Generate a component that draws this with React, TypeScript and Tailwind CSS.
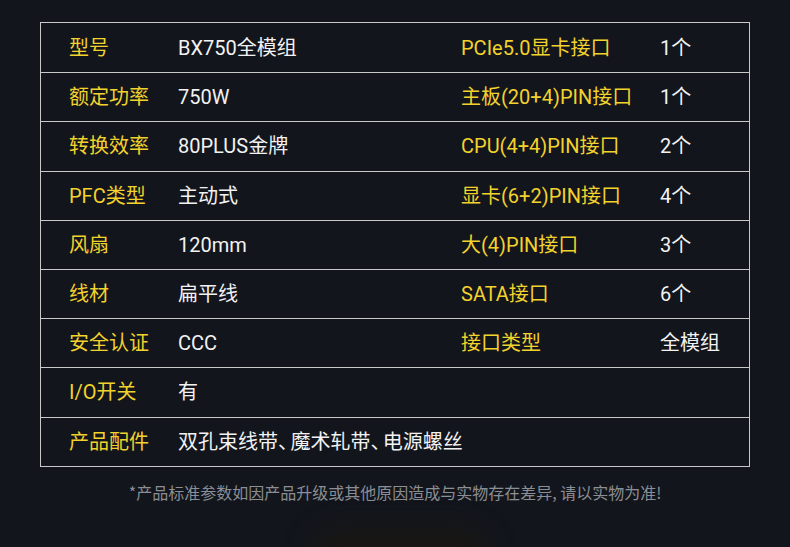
const rows: [string, string, string, string][] = [
  ['型号', 'BX750全模组', 'PCIe5.0显卡接口', '1个'],
  ['额定功率', '750W', '主板(20+4)PIN接口', '1个'],
  ['转换效率', '80PLUS金牌', 'CPU(4+4)PIN接口', '2个'],
  ['PFC类型', '主动式', '显卡(6+2)PIN接口', '4个'],
  ['风扇', '120mm', '大(4)PIN接口', '3个'],
  ['线材', '扁平线', 'SATA接口', '6个'],
  ['安全认证', 'CCC', '接口类型', '全模组'],
  ['I/O开关', '有', '', ''],
  ['产品配件', '双孔束线带、魔术轧带、电源螺丝', '', ''],
];

// the ideographic comma is set half-width in the picture
function tight(text: string) {
  return text.split('、').flatMap((part, i) =>
    i === 0
      ? [part]
      : [
          <span key={i} className="tracking-[-0.38em]">
            、
          </span>,
          part,
        ]
  );
}

export default function App() {
  return (
    <div
      className="relative w-[790px] h-[547px] overflow-hidden bg-[#12151c] pt-[22px]"
      style={{ fontFamily: 'Roboto, "Noto Sans CJK SC", sans-serif' }}
    >
      <div className="mx-[40px] border border-[#c9c9c9]">
        {rows.map(([k1, v1, k2, v2], i) => (
          <div
            key={k1}
            className={`flex items-center h-[49.2px] text-[20px] leading-none ${i > 0 ? 'border-t border-[#c9c9c9]' : ''}`}
          >
            <span className="w-[137px] pl-[28px] text-[#f2d22c] whitespace-nowrap">{k1}</span>
            <span className="w-[283px] text-[#f2f2f2] whitespace-nowrap">{tight(v1)}</span>
            <span className="w-[199px] text-[#f2d22c] whitespace-nowrap">{k2}</span>
            <span className="text-[#f2f2f2] whitespace-nowrap">{v2}</span>
          </div>
        ))}
      </div>

      <p
        className="mt-[17px] text-center text-[16px] leading-none text-[#8b8e94]"
        style={{ fontFamily: '"Noto Sans CJK SC", sans-serif' }}
      >
        *产品标准参数如因产品升级或其他原因造成与实物存在差异, 请以实物为准!
      </p>

      {/* faint glow at the bottom */}
      <div className="absolute left-[310px] top-[528px] w-[180px] h-[60px] rounded-full bg-[#191714] blur-md" />
    </div>
  );
}
